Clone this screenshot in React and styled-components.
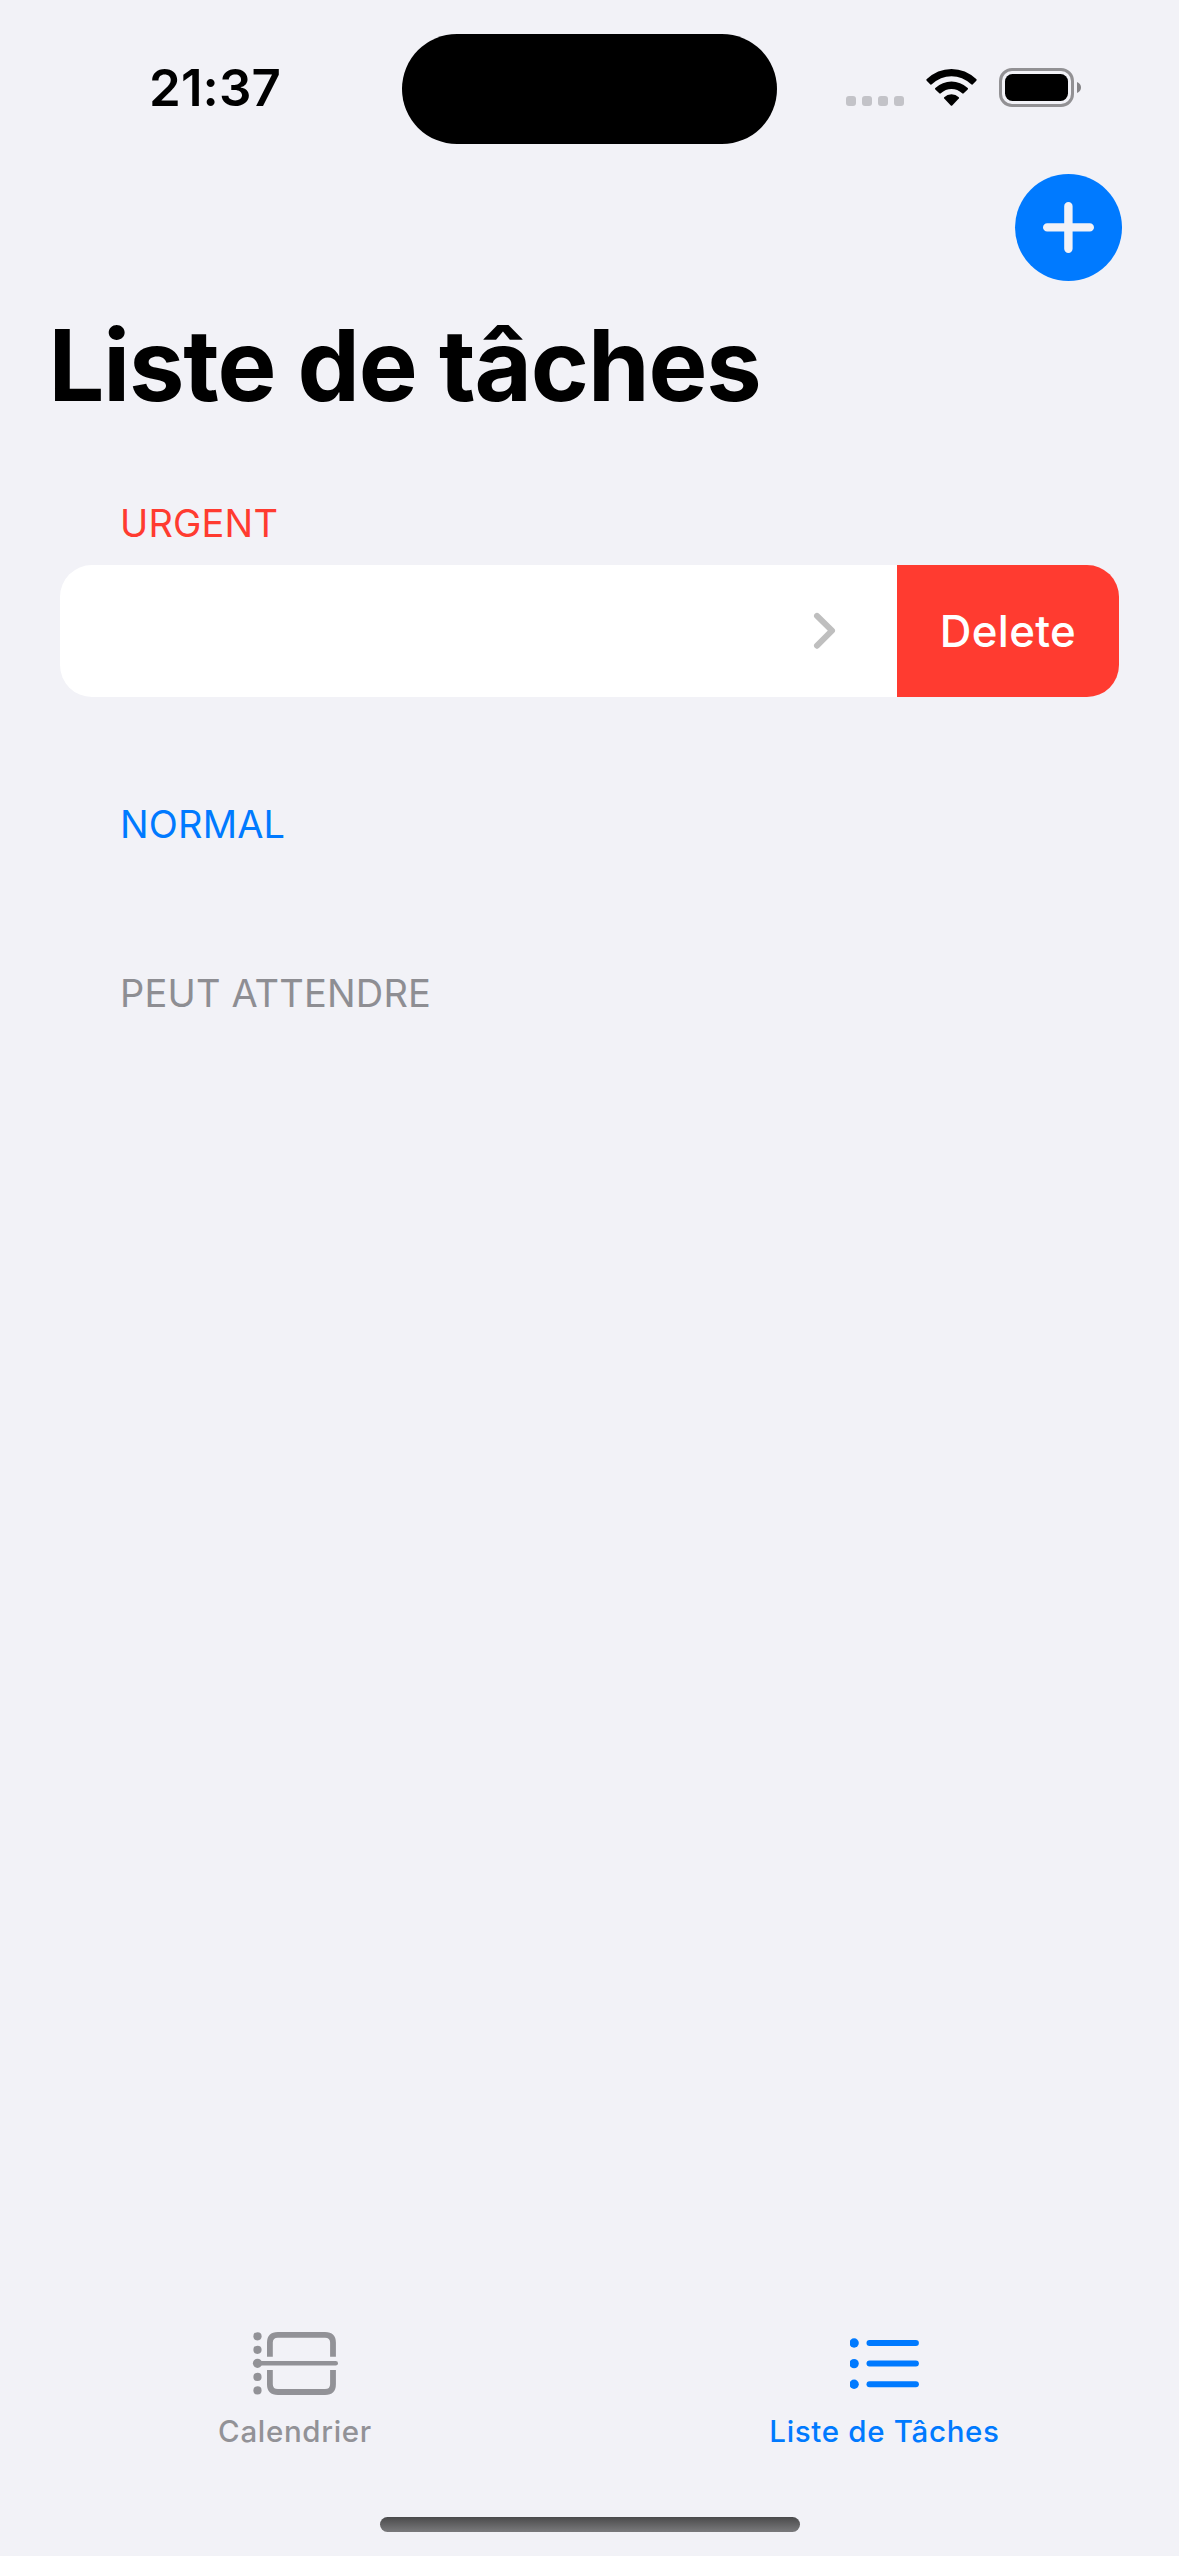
import React from "react";
import styled, { createGlobalStyle } from "styled-components";

const GlobalStyle = createGlobalStyle`
  *, *::before, *::after { box-sizing: border-box; }
  html, body { margin: 0; padding: 0; background: #f2f2f7; }
  svg { display: block; flex: none; }
`;

const Screen = styled.div`
  width: 1179px;
  height: 2556px;
  display: flex;
  flex-direction: column;
  overflow: hidden;
  background: #f2f2f7;
  color: #000;
  font-family: Inter, "Liberation Sans", sans-serif;
`;

const StatusBar = styled.header`
  height: 174px;
  flex: none;
  display: grid;
  grid-template-columns: 401.7px 375.6px 1fr;
  align-items: start;
`;

const Clock = styled.time`
  padding: 57px 0 0 149px;
  font-size: 51px;
  line-height: 62px;
  font-weight: 600;
  letter-spacing: 0.1px;
  white-space: nowrap;
`;

const Island = styled.div`
  height: 110px;
  margin-top: 34px;
  border-radius: 56px;
  background: #000;
`;

const Indicators = styled.div`
  display: flex;
  align-items: flex-start;
  gap: 22px;
  padding: 68px 0 0 68.7px;
`;

const SignalDots = styled.div`
  display: flex;
  gap: 6px;
  margin-top: 28px;
`;

const SignalDot = styled.span`
  width: 10px;
  height: 10px;
  border-radius: 3px;
  background: #c3c3c8;
`;

const Toolbar = styled.div`
  flex: none;
  display: flex;
  justify-content: flex-end;
  padding-right: 57px;
`;

const AddButton = styled.button`
  display: flex;
  width: 107px;
  height: 107px;
  padding: 0;
  border: 0;
  border-radius: 50%;
  background: #007aff;
`;

const Title = styled.h1`
  flex: none;
  margin: 24px 0 0 48.5px;
  font-size: 99px;
  line-height: 120px;
  font-weight: 700;
  letter-spacing: -1.15px;
  white-space: nowrap;
`;

const Content = styled.main`
  flex: 1;
  display: flex;
  flex-direction: column;
  padding: 75px 60px 0;
`;

const SectionHeader = styled.h2`
  margin: ${(p) => p.$gap || 0}px 0 0;
  padding-left: 60px;
  font-size: 38px;
  line-height: 46px;
  font-weight: 400;
  letter-spacing: 0.17px;
  color: ${(p) => p.$color};
  white-space: nowrap;
`;

const TaskRow = styled.div`
  display: flex;
  height: 132px;
  margin-top: 19px;
  border-radius: 32px;
  overflow: hidden;
`;

const TaskCell = styled.div`
  flex: 1;
  display: flex;
  align-items: center;
  justify-content: flex-end;
  padding-right: 60px;
  background: #fff;
`;

const DeleteButton = styled.button`
  width: 222px;
  padding: 2px 0 0;
  border: 0;
  background: #ff3b30;
  color: #fff;
  font: 500 43.8px/52px Inter, "Liberation Sans", sans-serif;
  letter-spacing: 0.35px;
  white-space: nowrap;
`;

const TabBar = styled.nav`
  flex: none;
  height: 195px;
  display: grid;
  grid-template-columns: 590px 589px;
`;

const Tab = styled.a`
  display: flex;
  flex-direction: column;
  align-items: center;
  color: ${(p) => (p.$active ? "#007aff" : "#929297")};
`;

const TabLabel = styled.span`
  margin-top: 16px;
  font-size: 29.5px;
  line-height: 36px;
  font-weight: 500;
  letter-spacing: 0.67px;
  white-space: nowrap;
`;

const HomeIndicator = styled.div`
  flex: none;
  align-self: center;
  width: 420px;
  height: 15px;
  margin: 0 0 24px 1px;
  border-radius: 8px;
  background: linear-gradient(#4a4a4b, #7a7a7c);
`;

const WifiIcon = () => (
  <svg width="51" height="39" viewBox="926 68 51 39">
    <path d="M926.5 79.3Q937.5 69 951.5 69T976.5 79.3Q977 80 976.3 80.7L972.6 84.4Q972 85 971.2 84.3Q962.5 76.2 951.5 76.2T931.8 84.3Q931 85 930.4 84.4L926.7 80.7Q926 80 926.5 79.3Z" />
    <path d="M935.3 88Q942.5 81.5 951.5 81.5T967.7 88Q968.4 88.8 967.7 89.5L963.7 93.3Q963 94 962.2 93.3Q957.5 89 951.5 89T940.8 93.3Q940 94 939.3 93.3L935.3 89.5Q934.6 88.8 935.3 88Z" />
    <path d="M944.2 97.2Q947.3 94.3 951.5 94.3T958.8 97.2Q959.4 97.9 958.8 98.6L952.2 105.4Q951.5 106.1 950.8 105.4L944.2 98.6Q943.6 97.9 944.2 97.2Z" />
  </svg>
);

const BatteryIcon = () => (
  <svg width="83" height="39" viewBox="0 0 83 39">
    <rect x="1.5" y="1.5" width="72" height="36" rx="11.5" fill="none" stroke="#929194" strokeWidth="3" />
    <rect x="6" y="6" width="63" height="27" rx="7.5" />
    <path d="M78 14Q82 15.8 82 19.5T78 25Z" fill="#858487" />
  </svg>
);

const PlusIcon = () => (
  <svg width="107" height="107" viewBox="0 0 107 107" stroke="#f2f2f7" strokeWidth="8.4" strokeLinecap="round">
    <path d="M53.4 32.2V74.8M32.2 53.4H74.8" />
  </svg>
);

const ChevronIcon = () => (
  <svg width="24" height="40" viewBox="0 0 24 40" fill="none" stroke="#bfbfbf" strokeWidth="6" strokeLinecap="round" strokeLinejoin="round">
    <path d="M4 4.9L19 19.7L4 34.7" />
  </svg>
);

const CalendarIcon = () => (
  <svg width="86" height="75" viewBox="252 2322 86 75" fill="currentColor">
    <circle cx="257.5" cy="2336.3" r="4.1" />
    <circle cx="257.5" cy="2349.8" r="4.1" />
    <circle cx="257.5" cy="2363.3" r="4.6" />
    <circle cx="257.5" cy="2376.9" r="4.1" />
    <circle cx="257.5" cy="2390.4" r="4.1" />
    <g fill="none" stroke="currentColor">
      <path d="M258 2363.3H335.7" strokeWidth="4.6" strokeLinecap="round" />
      <path d="M269.9 2356.7V2342.6Q269.9 2334.8 277.9 2334.8H325Q333 2334.8 333 2342.6V2356.7" strokeWidth="5.8" />
      <path d="M269.9 2370V2384.2Q269.9 2392 277.9 2392H325Q333 2392 333 2384.2V2370" strokeWidth="5.8" />
    </g>
  </svg>
);

const ListIcon = () => (
  <svg width="70" height="75" viewBox="849.5 2322 70 75" fill="currentColor">
    {[2343, 2363.6, 2384.3].map((y) => (
      <g key={y}>
        <circle cx="853.6" cy={y} r="4.7" />
        <rect x="866" y={y - 3} width="52.4" height="6" rx="3" />
      </g>
    ))}
  </svg>
);

export default function App() {
  return (
    <Screen>
      <GlobalStyle />
      <StatusBar>
        <Clock>21:37</Clock>
        <Island />
        <Indicators>
          <SignalDots>
            {[0, 1, 2, 3].map((n) => (
              <SignalDot key={n} />
            ))}
          </SignalDots>
          <WifiIcon />
          <BatteryIcon />
        </Indicators>
      </StatusBar>
      <Toolbar>
        <AddButton aria-label="Ajouter">
          <PlusIcon />
        </AddButton>
      </Toolbar>
      <Title>Liste de tâches</Title>
      <Content>
        <SectionHeader $color="#ff3b30">URGENT</SectionHeader>
        <TaskRow>
          <TaskCell>
            <ChevronIcon />
          </TaskCell>
          <DeleteButton>Delete</DeleteButton>
        </TaskRow>
        <SectionHeader $color="#007aff" $gap={104}>NORMAL</SectionHeader>
        <SectionHeader $color="#8e8e93" $gap={123}>PEUT ATTENDRE</SectionHeader>
      </Content>
      <TabBar>
        <Tab>
          <CalendarIcon />
          <TabLabel>Calendrier</TabLabel>
        </Tab>
        <Tab $active>
          <ListIcon />
          <TabLabel>Liste de Tâches</TabLabel>
        </Tab>
      </TabBar>
      <HomeIndicator />
    </Screen>
  );
}
